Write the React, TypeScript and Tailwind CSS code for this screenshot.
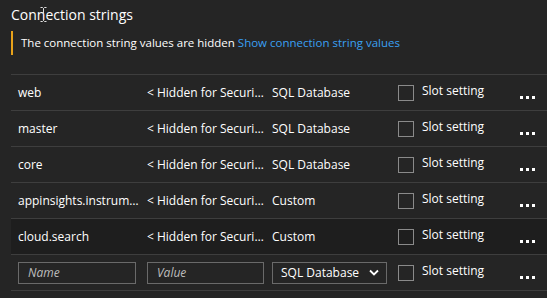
import React from 'react';

const rows = [
  { name: 'web', type: 'SQL Database' },
  { name: 'master', type: 'SQL Database' },
  { name: 'core', type: 'SQL Database' },
  { name: 'appinsights.instrumentationkey', type: 'Custom' },
  { name: 'cloud.search', type: 'Custom', hover: true },
];

function Checkbox() {
  return <div className="w-4 h-4 border border-[#8a8a8a] shrink-0" />;
}

function Dots() {
  return (
    <div className="flex gap-[3px] pt-[10px] pl-[14px]">
      <span className="w-[3px] h-[3px] bg-white" />
      <span className="w-[3px] h-[3px] bg-white" />
      <span className="w-[3px] h-[3px] bg-white" />
    </div>
  );
}

function Slot() {
  return (
    <div className="flex items-center w-[108px] shrink-0">
      <Checkbox />
      <span className="ml-[8px] -mt-[4px] whitespace-nowrap">Slot setting</span>
    </div>
  );
}

export default function App() {
  return (
    <div
      className="w-[547px] h-[298px] bg-[#252525] text-white text-[12px] overflow-hidden relative"
      style={{ fontFamily: '"Open Sans", "Noto Sans", sans-serif' }}
    >
      <h2 className="pl-[11px] pt-[4px] text-[14px] leading-[22px]">Connection strings</h2>
      <div className="ml-[11px] mt-[5px] h-[24px] border-l-2 border-[#e8a21a] pl-[8px] flex items-center text-[11.5px]">
        The connection string values are hidden&nbsp;
        <span className="text-[#3aa0f3]">Show connection string values</span>
      </div>

      <div className="ml-[11px] mt-[19px] border-t border-[#3e3e3e]">
        {rows.map((r) => (
          <div
            key={r.name}
            className={`flex items-center h-[36px] border-b border-[#3e3e3e] ${r.hover ? 'bg-[#1e1e1e]' : ''}`}
          >
            <div className="w-[136px] shrink-0 pl-[7px] pr-[4px] truncate">{r.name}</div>
            <div className="w-[125px] shrink-0 truncate pr-[6px]">&lt; Hidden for Security reasons &gt;</div>
            <div className="w-[126px] shrink-0">{r.type}</div>
            <Slot />
            <Dots />
          </div>
        ))}
        <div className="flex items-center h-[36px] border-b border-[#3e3e3e]">
          <div className="w-[136px] shrink-0 pl-[7px]">
            <div className="w-[118px] h-[22px] border border-[#6a6a6a] pl-[9px] flex items-center italic text-[#bdbdbd]">Name</div>
          </div>
          <div className="w-[125px] shrink-0">
            <div className="w-[117px] h-[22px] border border-[#6a6a6a] pl-[9px] flex items-center italic text-[#bdbdbd]">Value</div>
          </div>
          <div className="w-[126px] shrink-0">
            <div className="w-[115px] h-[22px] border border-[#6a6a6a] pl-[8px] pr-[6px] flex items-center justify-between">
              <span>SQL Database</span>
              <svg width="10" height="7" viewBox="0 0 10 7" className="mr-[1px]">
                <path d="M1 1.5 L5 5.5 L9 1.5" stroke="white" strokeWidth="1.8" fill="none" />
              </svg>
            </div>
          </div>
          <Slot />
          <Dots />
        </div>
      </div>

      <svg className="absolute left-[40px] top-[7px]" width="7" height="15" viewBox="0 0 7 15">
        <path d="M0.5 0.5 H2.5 L3.5 1.5 L4.5 0.5 H6.5 M3.5 1.5 V13.5 M0.5 14.5 H2.5 L3.5 13.5 L4.5 14.5 H6.5" stroke="#e0e0e0" strokeWidth="1" fill="none" />
      </svg>
    </div>
  );
}
